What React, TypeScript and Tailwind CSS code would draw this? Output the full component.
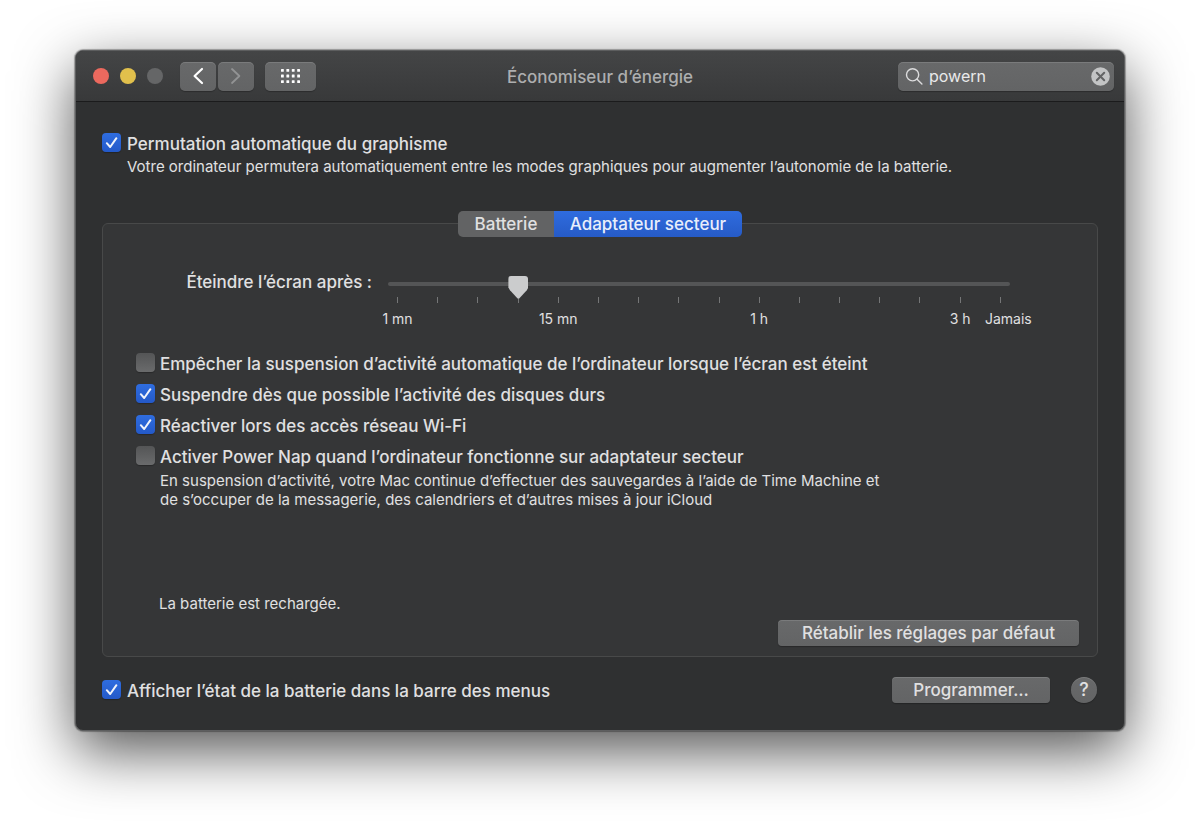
import React, { useState } from "react";

const BUTTON =
  "bg-linear-to-b from-[#68696a] to-[#636465] shadow-[inset_0_1px_0_rgba(255,255,255,0.12),0_1px_1px_rgba(0,0,0,0.25)]";

type CheckRowProps = {
  id: string;
  label: string;
  defaultChecked?: boolean;
  gap?: string;
};

function CheckRow({ id, label, defaultChecked, gap = "gap-[5px]" }: CheckRowProps) {
  return (
    <div className={`flex h-6 items-start pt-[2px] ${gap}`}>
      <span className="grid size-[19px] shrink-0">
        <input
          id={id}
          type="checkbox"
          defaultChecked={defaultChecked}
          className="peer size-[19px] appearance-none rounded-[4px] bg-linear-to-b from-[#545556] to-[#6a6b6c] shadow-[0_1px_1px_rgba(0,0,0,0.25)] [grid-area:1/1] checked:from-[#2f6de0] checked:to-[#2459c8]"
        />
        <svg
          viewBox="0 0 19 19"
          className="pointer-events-none hidden size-[19px] [grid-area:1/1] peer-checked:block"
          fill="none"
          stroke="#f0f3fa"
          strokeWidth="2"
          strokeLinecap="round"
          strokeLinejoin="round"
          aria-hidden="true"
        >
          <path d="M4.8 10.2 8.2 14 14.4 5.2" />
        </svg>
      </span>
      <label htmlFor={id} className="text-[17px] leading-[22px] font-medium whitespace-nowrap">
        {label}
      </label>
    </div>
  );
}

function TitleBar() {
  const [query, setQuery] = useState("powern");
  return (
    <header className="grid h-[51px] grid-cols-[1fr_auto_1fr] items-center rounded-t-[7px] border-b border-[#1b1b1c] bg-linear-to-b from-[#444546] to-[#38393a] px-[10px]">
      <div className="flex items-center pl-[7px]">
        <div className="flex gap-[11px]">
          <button aria-label="Fermer" className="size-4 rounded-full bg-[#ec695e]" />
          <button aria-label="Réduire" className="size-4 rounded-full bg-[#e1c04c]" />
          <button aria-label="Agrandir" disabled className="size-4 rounded-full bg-[#656667]" />
        </div>
        <div className="ml-[17px] flex gap-[2px]">
          <button aria-label="Précédent" className={`grid h-[29px] w-9 place-items-center rounded-[5px] ${BUTTON}`}>
            <svg viewBox="0 0 12 18" className="h-[18px] w-3" fill="none" stroke="#fff" strokeWidth="2.2" strokeLinecap="round" strokeLinejoin="round" aria-hidden="true">
              <path d="M10 2 2.6 9 10 16" />
            </svg>
          </button>
          <button aria-label="Suivant" disabled className={`grid h-[29px] w-9 place-items-center rounded-[5px] ${BUTTON}`}>
            <svg viewBox="0 0 12 18" className="h-[18px] w-3" fill="none" stroke="#929394" strokeWidth="1.8" strokeLinecap="round" strokeLinejoin="round" aria-hidden="true">
              <path d="M2 2 9.4 9 2 16" />
            </svg>
          </button>
        </div>
        <button aria-label="Tout afficher" className={`ml-[11px] grid h-[29px] w-[51px] place-items-center rounded-[5px] ${BUTTON}`}>
          <svg viewBox="0 0 19 14" className="h-[14px] w-[19px]" fill="#fff" aria-hidden="true">
            {[0, 5.4, 10.8, 16.2].map((x) =>
              [0, 5.6, 11.2].map((y) => <rect key={`${x}-${y}`} x={x} y={y} width="2.8" height="2.8" rx="0.5" />),
            )}
          </svg>
        </button>
      </div>
      <h1 className="pt-[2px] text-[17px] leading-6 font-medium text-[#adaeaf]">Économiseur d’énergie</h1>
      <div className={`flex h-[29px] w-[216px] items-center justify-self-end rounded-[5px] pr-1 pl-[7px] ${BUTTON}`}>
        <svg viewBox="0 0 18 18" className="size-[18px] shrink-0" fill="none" stroke="#dcdcdd" strokeWidth="1.4" strokeLinecap="round" aria-hidden="true">
          <circle cx="7.6" cy="7.8" r="6.1" />
          <path d="M12.1 12.3 16.9 17.1" />
        </svg>
        <input
          type="text"
          aria-label="Rechercher"
          value={query}
          onChange={(e) => setQuery(e.target.value)}
          className="ml-[6px] min-w-0 flex-1 bg-transparent text-base text-[#e9e9ea] outline-none"
        />
        <button aria-label="Effacer" onClick={() => setQuery("")} className="size-[19px] shrink-0">
          <svg viewBox="0 0 19 19" className="size-[19px]" aria-hidden="true">
            <circle cx="9.5" cy="9.5" r="9.3" fill="#c3c4c5" />
            <path d="M5.8 5.8 13.2 13.2M13.2 5.8 5.8 13.2" stroke="#636465" strokeWidth="2" strokeLinecap="round" />
          </svg>
        </button>
      </div>
    </header>
  );
}

const TICKS = ["1 mn", "", "", "", "15 mn", "", "", "", "", "1 h", "", "", "", "", "3 h", "Jamais"];

function DelaySlider() {
  return (
    <div className="mt-[33px] flex items-start pr-[87px]">
      <label htmlFor="delay" className="w-[269px] shrink-0 text-right text-[17px] leading-6 font-medium">
        Éteindre l’écran après :
      </label>
      <div className="ml-4 flex-1 pt-[2px]">
        <input
          id="delay"
          type="range"
          min={0}
          max={15}
          defaultValue={3}
          className="block h-[23px] w-full appearance-none bg-transparent [&::-webkit-slider-runnable-track]:h-1 [&::-webkit-slider-runnable-track]:rounded-full [&::-webkit-slider-runnable-track]:bg-[#545556] [&::-webkit-slider-thumb]:-mt-[6px] [&::-webkit-slider-thumb]:h-[23px] [&::-webkit-slider-thumb]:w-5 [&::-webkit-slider-thumb]:appearance-none [&::-webkit-slider-thumb]:rounded-[3px] [&::-webkit-slider-thumb]:bg-[#cbcccd] [&::-webkit-slider-thumb]:[clip-path:polygon(0_0,100%_0,100%_52%,92%_64%,54%_100%,46%_100%,8%_64%,0_52%)]"
        />
        <div className="mt-[2px] flex justify-between px-[9px]" aria-hidden="true">
          {TICKS.map((text, i) => (
            <div key={i} className="flex w-px flex-col items-center">
              <span className="h-[6px] w-px bg-[#757677]" />
              <span className={`mt-[7px] h-[18px] text-sm leading-[18px] whitespace-nowrap ${i === TICKS.length - 1 ? "pl-4" : ""}`}>
                {text}
              </span>
            </div>
          ))}
        </div>
      </div>
    </div>
  );
}

export default function App() {
  const [tab, setTab] = useState<"battery" | "adapter">("adapter");
  const tabStyle = (active: boolean) =>
    active ? "bg-linear-to-b from-[#2f6cdf] to-[#265bc7] text-[#e8eefb]" : "bg-[#626364]";
  return (
    <main className="min-h-screen bg-white px-[75px] py-[50px] font-['Inter','Liberation_Sans',sans-serif]">
      <section className="rounded-[8px] border border-[#5d5e5f] bg-[#2f3031] text-[#e0e0e1] shadow-[0_0_1px_1px_rgba(0,0,0,0.3),0_20px_58px_rgba(0,0,0,0.68)]">
        <TitleBar />
        <div className="px-[26px] pt-[29px] pb-[27px]">
          <CheckRow id="graphics" label="Permutation automatique du graphisme" defaultChecked gap="gap-[6px]" />
          <p className="mt-[2px] pl-[25px] text-[15px] leading-5">
            Votre ordinateur permutera automatiquement entre les modes graphiques pour augmenter l’autonomie de la batterie.
          </p>

          <section className="mt-[46px] rounded-[6px] border border-[#484949] bg-[#353637] pb-[10px]">
            <div role="tablist" className="mx-auto -mt-[13px] flex h-[26px] w-[284px] overflow-hidden rounded-[5px] text-[17px] leading-[26px] font-medium">
              <button role="tab" aria-selected={tab === "battery"} onClick={() => setTab("battery")} className={`w-24 ${tabStyle(tab === "battery")}`}>
                Batterie
              </button>
              <button role="tab" aria-selected={tab === "adapter"} onClick={() => setTab("adapter")} className={`flex-1 ${tabStyle(tab === "adapter")}`}>
                Adaptateur secteur
              </button>
            </div>
            <DelaySlider />
            <div className="mt-[23px] flex flex-col gap-[7px] pl-[33px]">
              <CheckRow id="prevent" label="Empêcher la suspension d’activité automatique de l’ordinateur lorsque l’écran est éteint" />
              <CheckRow id="disks" label="Suspendre dès que possible l’activité des disques durs" defaultChecked />
              <CheckRow id="wifi" label="Réactiver lors des accès réseau Wi-Fi" defaultChecked />
              <CheckRow id="nap" label="Activer Power Nap quand l’ordinateur fonctionne sur adaptateur secteur" />
            </div>
            <p className="mt-[3px] pl-[57px] text-[15px] leading-[19px]">
              En suspension d’activité, votre Mac continue d’effectuer des sauvegardes à l’aide de Time Machine et
              <br />
              de s’occuper de la messagerie, des calendriers et d’autres mises à jour iCloud
            </p>
            <p className="mt-[85px] pl-[56px] text-[15px] leading-5">La batterie est rechargée.</p>
            <div className="mt-[6px] flex justify-end pr-[18px]">
              <button className={`h-[26px] w-[301px] rounded-[4px] text-[17px] leading-[26px] font-medium ${BUTTON}`}>
                Rétablir les réglages par défaut
              </button>
            </div>
          </section>

          <footer className="mt-5 flex items-center">
            <CheckRow id="menubar" label="Afficher l’état de la batterie dans la barre des menus" defaultChecked gap="gap-[6px]" />
            <button className={`ml-auto h-[26px] w-[158px] rounded-[4px] text-[17px] leading-[26px] font-medium ${BUTTON}`}>Programmer…</button>
            <button aria-label="Aide" className={`mr-[1px] ml-[21px] size-[26px] rounded-full text-lg leading-[26px] font-medium ${BUTTON}`}>
              ?
            </button>
          </footer>
        </div>
      </section>
    </main>
  );
}
